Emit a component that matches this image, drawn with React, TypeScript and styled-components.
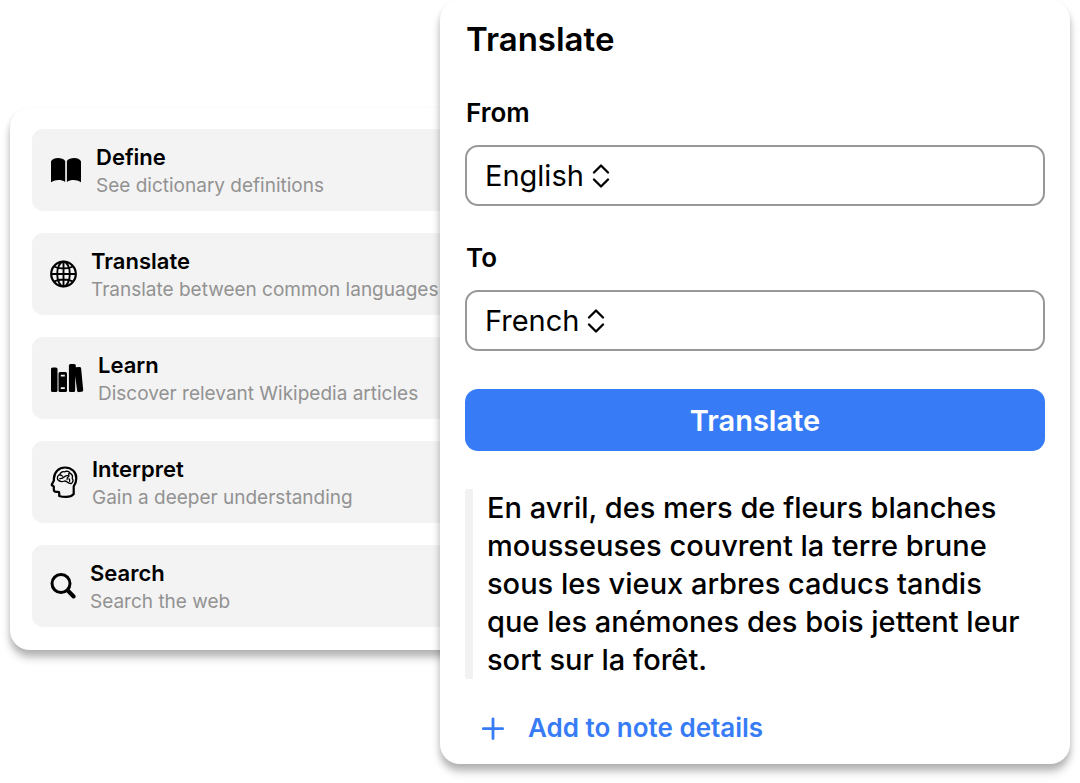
import React from "react";
import styled, { createGlobalStyle } from "styled-components";

const GlobalStyle = createGlobalStyle`
  *, *::before, *::after { box-sizing: border-box; }
  body {
    margin: 0;
    background: #fff;
    color: #000;
    font-family: Inter, "Liberation Sans", sans-serif;
  }
  button, select { font: inherit; color: inherit; }
`;

const Page = styled.main`
  display: grid;
  grid-template-columns: minmax(0, 43fr) minmax(0, 63fr);
  align-items: start;
  padding: 0 10px 19px;
`;

const Card = styled.section`
  background: #fff;
  border-radius: 20px;
  box-shadow: 0 8px 9px rgba(0, 0, 0, 0.22), 0 4px 6px rgba(0, 0, 0, 0.12);
`;

const MenuCard = styled(Card)`
  margin: 108px -24px 0 0;
  padding: 21px 0 23px 22px;
`;

const MenuList = styled.ul`
  display: flex;
  flex-direction: column;
  gap: 22px;
  margin: 0;
  padding: 0;
  list-style: none;
`;

const MenuItem = styled.button`
  display: flex;
  align-items: center;
  gap: 14px;
  width: 100%;
  height: 82px;
  padding: 0 18px;
  border: 0;
  border-radius: 11px;
  background: #f3f3f3;
  text-align: left;
  cursor: pointer;

  svg { flex: none; }
`;

const ItemText = styled.span`
  display: flex;
  flex-direction: column;
  gap: 1px;
  padding-top: 3px;
  line-height: 28px;
  white-space: nowrap;
`;

const ItemTitle = styled.span`
  font-size: 22px;
  font-weight: 600;
`;

const ItemHint = styled.span`
  font-size: 19px;
  color: #929292;
`;

const TranslateCard = styled(Card)`
  position: relative;
  padding: 17px 25px 18px;
`;

const Title = styled.h1`
  margin: 0;
  padding-left: 1px;
  font-size: 33px;
  line-height: 44px;
  font-weight: 600;
`;

const Field = styled.div`
  display: flex;
  flex-direction: column;
  gap: 16px;
  margin-top: 36px;
`;

const Label = styled.label`
  padding-left: 1px;
  font-size: 26px;
  line-height: 32px;
  font-weight: 600;
`;

const SelectBox = styled.div`
  display: flex;
  align-items: center;
  gap: 8px;
  height: 61px;
  padding: 0 18px;
  border: 2px solid #989898;
  border-radius: 13px;
`;

const Select = styled.select`
  field-sizing: content;
  appearance: none;
  padding: 0;
  border: 0;
  background: transparent;
  font-size: 29px;
  line-height: 40px;
  cursor: pointer;
`;

const SubmitButton = styled.button`
  display: block;
  width: 100%;
  height: 62px;
  margin-top: 38px;
  border: 0;
  border-radius: 13px;
  background: #377cf6;
  color: #fff;
  font-size: 29px;
  font-weight: 600;
  cursor: pointer;
`;

const Quote = styled.blockquote`
  margin: 38px 0 0;
  padding: 0 22px 0 14px;
  border-left: 8px solid #f2f2f2;
  border-radius: 3px;
  font-size: 29px;
  line-height: 38px;
  font-weight: 500;
`;

const AddButton = styled.button`
  display: flex;
  align-items: center;
  gap: 24px;
  margin-top: 31px;
  padding: 0 16px;
  border: 0;
  background: transparent;
  color: #377cf6;
  font-size: 26px;
  line-height: 36px;
  font-weight: 600;
  cursor: pointer;
`;

const BookIcon = () => (
  <svg width="32" height="26" viewBox="0 0 32 26" aria-hidden="true">
    <path d="M1 4.200C2.600 1.900 5 1 8 1s5.700.9 7.200 2.900V25C13.200 23.600 11 23 8.500 23S3.600 23.700 1 25.200z" />
    <path d="M31 4.200C29.400 1.900 27.500 1 24.300 1s-5.900.9-7.400 2.900V25c2-1.400 4.200-2 6.700-2s4.800.7 7.400 2.200z" />
  </svg>
);

const GlobeIcon = () => (
  <svg width="27" height="28" viewBox="0 0 27 28" fill="none" stroke="#000" strokeWidth="1.900" aria-hidden="true">
    <circle cx="13.500" cy="14" r="12.300" strokeWidth="2.200" />
    <ellipse cx="13.500" cy="14" rx="6.300" ry="12.300" />
    <path d="M13.500 1.700v24.600M1.200 14h24.600M4 6.500c5 2.600 14 2.600 19 0M4 21.500c5-2.600 14-2.600 19 0" />
  </svg>
);

const BooksIcon = () => (
  <svg width="34" height="30" viewBox="0 0 34 30" aria-hidden="true">
    <rect x="1" y="4.500" width="6.500" height="24.500" rx="1.600" />
    <path
      fillRule="evenodd"
      d="M10 9h5.500a1.500 1.500 0 0 1 1.500 1.500v17a1.500 1.500 0 0 1-1.500 1.500H10a1.500 1.500 0 0 1-1.500-1.500v-17A1.500 1.500 0 0 1 10 9zm.8 2.800v1.700h4v-1.700zm0 12.500V26h4v-1.700z"
    />
    <path d="M20.500 1h3.700a1.600 1.600 0 0 1 1.600 1.600v1.700l3.600-.4a1.600 1.600 0 0 1 1.700 1.400L33.200 27a1.600 1.600 0 0 1-1.400 1.800l-2.900.3a1.600 1.600 0 0 1-1.800-1.400L25.200 13v14.400a1.600 1.600 0 0 1-1.600 1.600h-3.100a1.600 1.600 0 0 1-1.600-1.600V2.600A1.600 1.600 0 0 1 20.500 1z" />
  </svg>
);

const HeadIcon = () => (
  <svg
    width="28"
    height="32"
    viewBox="0 0 28 32"
    fill="none"
    stroke="#000"
    strokeLinecap="round"
    strokeLinejoin="round"
    aria-hidden="true"
  >
    <path
      strokeWidth="2.200"
      d="M9.200 30v-3.200c0-.6-.4-.9-1-.9H6.300c-1.700 0-2.500-.9-2.500-2.500v-3L2.300 19.500c-.6-.4-.6-1-.2-1.600l1.800-3.400v-2.200C4.400 5.700 8.900 1.500 15 1.500c6.600 0 11.300 4.600 11.300 10.700 0 3.400-1 5.900-2.600 8.200V28c-1.700 2-4.700 2.900-7.700 2.900-2.800 0-5-.3-6.800-.9z"
    />
    <path
      strokeWidth="1.300"
      d="M7.700 13.500c-.9-2.200.2-4.300 2-4.800.7-2.200 2.800-3.400 5-2.900 2-1.100 4.600-.4 5.500 1.600 1.800 1 2.600 3 2 4.800 1.100 1.900.9 4.200-.9 5.300-1.600.1-3-.3-4-1.500-1.200-.7-1.700-1-2.800-1-2.200.8-5.300.6-6.800-1.500zM10 9c1.200 0 2 .4 2.500 1.300M9.800 12.600c2 .4 3.400-.6 4.600-1.800 1-.9 2.200-1.400 3.600-1.200M18.800 7.500v3c-1.300.7-2 1.700-1.700 3M19 12.700c.7.7.9 1.700.6 2.700"
    />
  </svg>
);

const SearchIcon = () => (
  <svg width="26" height="28" viewBox="0 0 26 28" fill="none" stroke="#000" strokeLinecap="round" aria-hidden="true">
    <circle cx="11" cy="11.500" r="9" strokeWidth="3" />
    <path d="M17.800 18.500l5.800 6" strokeWidth="4" />
  </svg>
);

const ChevronsIcon = () => (
  <svg
    width="18"
    height="24"
    viewBox="0 0 18 24"
    fill="none"
    stroke="#000"
    strokeWidth="2.300"
    strokeLinecap="round"
    strokeLinejoin="round"
    aria-hidden="true"
  >
    <path d="M2 8.500l7-7 7 7M2 15.500l7 7 7-7" />
  </svg>
);

const PlusIcon = () => (
  <svg width="23" height="23" viewBox="0 0 23 23" fill="none" stroke="currentColor" strokeWidth="2.800" strokeLinecap="round" aria-hidden="true">
    <path d="M12 2v19.500M2.300 11.700h19.400" />
  </svg>
);

const actions = [
  { title: "Define", hint: "See dictionary definitions", Icon: BookIcon },
  { title: "Translate", hint: "Translate between common languages", Icon: GlobeIcon },
  { title: "Learn", hint: "Discover relevant Wikipedia articles", Icon: BooksIcon },
  { title: "Interpret", hint: "Gain a deeper understanding", Icon: HeadIcon },
  { title: "Search", hint: "Search the web", Icon: SearchIcon },
];

interface LanguageFieldProps {
  id: string;
  label: string;
  initial: string;
}

const LanguageField = ({ id, label, initial }: LanguageFieldProps) => (
  <Field>
    <Label htmlFor={id}>{label}</Label>
    <SelectBox>
      <Select id={id} defaultValue={initial}>
        <option>English</option>
        <option>French</option>
      </Select>
      <ChevronsIcon />
    </SelectBox>
  </Field>
);

export default function App() {
  return (
    <>
      <GlobalStyle />
      <Page>
        <MenuCard>
          <MenuList>
            {actions.map(({ title, hint, Icon }) => (
              <li key={title}>
                <MenuItem type="button">
                  <Icon />
                  <ItemText>
                    <ItemTitle>{title}</ItemTitle>
                    <ItemHint>{hint}</ItemHint>
                  </ItemText>
                </MenuItem>
              </li>
            ))}
          </MenuList>
        </MenuCard>
        <TranslateCard>
          <Title>Translate</Title>
          <LanguageField id="from" label="From" initial="English" />
          <LanguageField id="to" label="To" initial="French" />
          <SubmitButton type="button">Translate</SubmitButton>
          <Quote lang="fr">
            En avril, des mers de fleurs blanches mousseuses couvrent la terre brune sous les vieux arbres caducs tandis
            que les anémones des bois jettent leur sort sur la forêt.
          </Quote>
          <AddButton type="button">
            <PlusIcon />
            Add to note details
          </AddButton>
        </TranslateCard>
      </Page>
    </>
  );
}
